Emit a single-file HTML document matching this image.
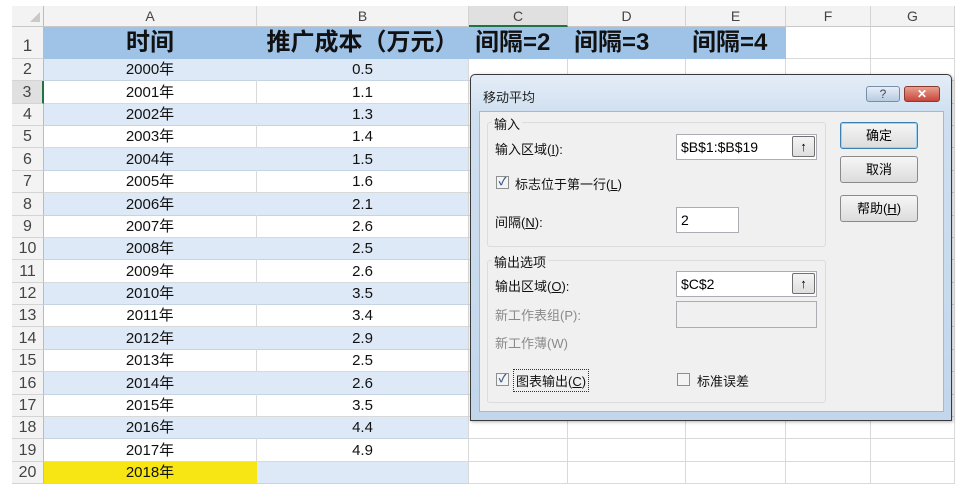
<!DOCTYPE html>
<html><head><meta charset="utf-8"><style>
*{margin:0;padding:0;box-sizing:border-box}
body{width:968px;height:499px;background:#fff;position:relative;overflow:hidden;font-family:"Liberation Sans","Noto Sans CJK SC",sans-serif;}
.a{position:absolute}
.ch{position:absolute;top:6px;height:21px;background:#f3f3f3;border-right:1px solid #d4d4d4;border-bottom:1px solid #c8c8c8;font-size:14px;color:#444;text-align:center;line-height:21px}
.rh{position:absolute;left:12px;width:32px;background:#f3f3f3;border-bottom:1px solid #d4d4d4;border-right:1px solid #bbb;font-size:16px;color:#444;text-align:center}
.c{position:absolute;border-right:1px solid #d9d9d9;border-bottom:1px solid #d9d9d9;text-align:center;font-size:15px;color:#111}
.dlg{font-size:13px;color:#111}
.btn{position:absolute;left:840px;width:78px;height:27px;border:1px solid #8a8a8a;border-radius:3px;background:linear-gradient(#f6f6f6,#dcdcdc);text-align:center;line-height:25px;font-size:13px}
.fld{position:absolute;background:#fff;border:1px solid #abadb3;font-size:14px;line-height:24px;padding-left:4px}
.up{position:absolute;width:23px;height:21px;border:1px solid #707070;border-radius:2px;background:linear-gradient(#f4f4f4,#dedede);text-align:center;font-size:13px;font-weight:bold;line-height:19px}
.cb{position:absolute;width:13px;height:13px;border:1px solid #8e8f8f;background:#f4f4f4;font-size:11px;line-height:11px;text-align:center;color:#3a5a8a;font-weight:bold}
.grp{position:absolute;border:1px solid #dcdcdc;border-radius:3px}
</style></head><body>
<div class="a" style="left:12px;top:6px;width:32px;height:21px;background:#f3f3f3;border-right:1px solid #bbb;border-bottom:1px solid #c8c8c8"></div>
<div class="a" style="left:30px;top:12px;width:0;height:0;border-left:10px solid transparent;border-bottom:10px solid #c9c9c9"></div>
<div class="ch" style="left:44px;width:213px">A</div>
<div class="ch" style="left:257px;width:212px">B</div>
<div class="ch" style="left:469px;width:99px;background:#e0e0e0;border-bottom:2px solid #217346">C</div>
<div class="ch" style="left:568px;width:118px">D</div>
<div class="ch" style="left:686px;width:100px">E</div>
<div class="ch" style="left:786px;width:85px">F</div>
<div class="ch" style="left:871px;width:84px">G</div>
<div id="g"></div>
<script>
var out='';
var yrs=['2000','2001','2002','2003','2004','2005','2006','2007','2008','2009','2010','2011','2012','2013','2014','2015','2016','2017','2018'];
var vals=['0.5','1.1','1.3','1.4','1.5','1.6','2.1','2.6','2.5','2.6','3.5','3.4','2.9','2.5','2.6','3.5','4.4','4.9',''];
var cols=[[469,99],[568,118],[686,100],[786,85],[871,84]];
out+='<div class="rh" style="top:27px;height:32px;line-height:38px;font-size:17px">1</div>';
out+='<div class="c" style="left:44px;top:27px;width:213px;height:32px;background:#9fc2e7;border-color:#9fc2e7;font-size:24px;font-weight:bold;line-height:32px">时间</div>';
out+='<div class="c" style="left:257px;top:27px;width:212px;height:32px;background:#9fc2e7;border-color:#9fc2e7;font-size:24px;font-weight:bold;line-height:32px">推广成本（万元）</div>';
var hd=['间隔=2','间隔=3','间隔=4'];
for(var j=0;j<5;j++){var s=j<3?'background:#9fc2e7;border-color:#9fc2e7;font-size:24px;font-weight:bold;line-height:32px;text-align:left;padding-left:6px':'';out+='<div class="c" style="left:'+cols[j][0]+'px;top:27px;width:'+cols[j][1]+'px;height:32px;'+s+'">'+(j<3?hd[j]:'')+'</div>';}
for(var i=0;i<19;i++){
 var t=59+Math.round(i*22.37), h=Math.round((i+1)*22.37)-Math.round(i*22.37);
 var bl=(i%2==0);
 out+='<div class="rh" style="top:'+t+'px;height:'+h+'px;line-height:'+h+'px;'+(i==1?'background:#e0e0e0;border-right:2px solid #217346':'')+'">'+(i+2)+'</div>';
 var bgA=i==18?'#f7e613':(bl?'#dde9f6':'#fff');
 var bgB=bl?'#dde9f6':'#fff';
 out+='<div class="c" style="left:44px;top:'+t+'px;width:213px;height:'+h+'px;line-height:'+h+'px;background:'+bgA+';'+(bl?'border-bottom-color:#c5d3e3;border-right-color:'+bgA:'')+'">'+yrs[i]+'年</div>';
 out+='<div class="c" style="left:257px;top:'+t+'px;width:212px;height:'+h+'px;line-height:'+h+'px;background:'+bgB+';'+(bl?'border-bottom-color:#c5d3e3':'')+'">'+vals[i]+'</div>';
 for(var j=0;j<5;j++)out+='<div class="c" style="left:'+cols[j][0]+'px;top:'+t+'px;width:'+cols[j][1]+'px;height:'+h+'px"></div>';
}
document.getElementById('g').innerHTML=out;
</script>
<div class="a dlg" style="left:470px;top:74px;width:482px;height:347px;border:1px solid #3a3a3a;border-radius:5px 5px 0 0;background:linear-gradient(#e4edf7,#cfdff0 40px,#c2d6ec);box-shadow:1px 1px 3px rgba(0,0,0,.3)">
 <div class="a" style="left:12px;top:12px;font-size:13px;color:#222">移动平均</div>
 <div class="a" style="left:395px;top:11px;width:34px;height:16px;border:1px solid #7a8ea8;border-radius:3px;background:linear-gradient(#e6eef8,#b8cbe2);text-align:center;font-size:12px;line-height:14px;color:#445">?</div>
 <div class="a" style="left:433px;top:11px;width:36px;height:16px;border:1px solid #8b3a30;border-radius:3px;background:linear-gradient(#e8a090,#c8453a);text-align:center;font-size:12px;line-height:14px;color:#fff;font-weight:bold">✕</div>
 <div class="a" style="left:8px;top:36px;width:465px;height:301px;background:#f0f0f0;border:1px solid #a8b8cc"></div>
</div>
<div class="grp" style="left:487px;top:122px;width:339px;height:125px"></div>
<div class="a dlg" style="left:492px;top:114px;background:#f0f0f0;padding:0 2px">输入</div>
<div class="a dlg" style="left:495px;top:139px">输入区域(<u>I</u>):</div>
<div class="fld" style="left:676px;top:134px;width:141px;height:26px">$B$1:$B$19</div>
<div class="up" style="left:792px;top:136px">↑</div>
<div class="cb" style="left:496px;top:176px">✓</div>
<div class="a dlg" style="left:515px;top:174px">标志位于第一行(<u>L</u>)</div>
<div class="a dlg" style="left:495px;top:212px">间隔(<u>N</u>):</div>
<div class="fld" style="left:676px;top:207px;width:63px;height:26px">2</div>
<div class="grp" style="left:487px;top:260px;width:339px;height:143px"></div>
<div class="a dlg" style="left:492px;top:252px;background:#f0f0f0;padding:0 2px">输出选项</div>
<div class="a dlg" style="left:495px;top:276px">输出区域(<u>O</u>):</div>
<div class="fld" style="left:676px;top:271px;width:141px;height:26px">$C$2</div>
<div class="up" style="left:792px;top:273px">↑</div>
<div class="a dlg" style="left:495px;top:305px;color:#8a8a8a">新工作表组(P):</div>
<div class="fld" style="left:676px;top:301px;width:141px;height:27px;background:#f0f0f0"></div>
<div class="a dlg" style="left:495px;top:333px;color:#8a8a8a">新工作薄(W)</div>
<div class="cb" style="left:496px;top:373px">✓</div>
<div class="a dlg" style="left:513px;top:369px;border:1px dotted #333;padding:1px 2px">图表输出(<u>C</u>)</div>
<div class="cb" style="left:677px;top:373px"></div>
<div class="a dlg" style="left:697px;top:371px">标准误差</div>
<div class="btn" style="top:122px;border-color:#3c7fb1;box-shadow:inset 0 0 0 1px #9cd4f0">确定</div>
<div class="btn" style="top:156px">取消</div>
<div class="btn" style="top:195px">帮助(<u>H</u>)</div>
</body></html>
